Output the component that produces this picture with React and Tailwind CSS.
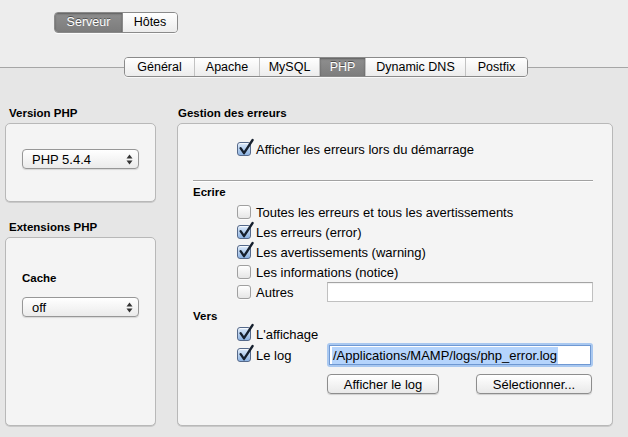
import React from "react";

function Check({ checked }) {
  return (
    <span className="relative inline-block w-[14px] h-[14px] shrink-0">
      <span
        className={
          checked
            ? "absolute inset-0 rounded-[3px] border border-[#55698a] bg-gradient-to-b from-[#dbe9f9] to-[#8db3e2] shadow-[inset_0_1px_1px_rgba(255,255,255,0.8)]"
            : "absolute inset-0 rounded-[3px] border border-[#a0a0a0] bg-gradient-to-b from-white to-[#e6e6e6] shadow-[0_1px_0_rgba(255,255,255,0.7)]"
        }
      />
      {checked && (
        <svg
          className="absolute left-[1px] top-[-4px]"
          width="16"
          height="18"
          viewBox="0 0 16 18"
        >
          <path
            d="M2.6 10.2 L6 15.2 L14.6 2"
            fill="none"
            stroke="#16202e"
            strokeWidth="2.3"
            strokeLinecap="round"
            strokeLinejoin="round"
          />
        </svg>
      )}
    </span>
  );
}

function Select({ value }) {
  return (
    <div className="w-[117px] h-[20px] rounded-[4px] border border-[#979797] bg-gradient-to-b from-white to-[#ebebeb] shadow-[0_1px_1px_rgba(0,0,0,0.12)] flex items-center pl-[9px] pr-[5px]">
      <span className="flex-1 text-[13px] leading-none">{value}</span>
      <svg width="7" height="11" viewBox="0 0 7 11">
        <path d="M3.5 0.5 L6.5 4.5 L0.5 4.5 Z" fill="#333" />
        <path d="M3.5 10.5 L6.5 6.5 L0.5 6.5 Z" fill="#333" />
      </svg>
    </div>
  );
}

function Row({ checked, label, children, h = "h-[20px]" }) {
  return (
    <div className={`flex items-center ${h}`}>
      <div className="flex items-center w-[90px] shrink-0 whitespace-nowrap">
        <Check checked={checked} />
        <span className="ml-[5px] text-[13px] leading-none">{label}</span>
      </div>
      {children}
    </div>
  );
}

function Button({ children, w }) {
  return (
    <div
      className={`${w} h-[20px] rounded-[4px] border border-[#8d8d8d] bg-gradient-to-b from-white to-[#e9e9e9] shadow-[0_1px_1px_rgba(0,0,0,0.15)] flex items-center justify-center text-[13px] leading-none`}
    >
      {children}
    </div>
  );
}

const tabs = [
  ["Général", "w-[69px]"],
  ["Apache", "w-[65px]"],
  ["MySQL", "w-[60px]"],
  ["PHP", "w-[46px]"],
  ["Dynamic DNS", "w-[100px]"],
  ["Postfix", "w-[62px]"],
];

export default function App() {
  return (
    <div className="w-[628px] h-[437px] overflow-hidden bg-[#e6e6e6] text-black font-['Liberation_Sans',Arial,sans-serif] flex flex-col">
      {/* top area */}
      <div className="bg-[#ededed] pt-[12px] h-[57px]">
        <div className="ml-[54px] flex h-[21px] w-[124px] rounded-[4px] border border-[#8a8a8a] overflow-hidden text-[12.5px] leading-none shadow-[0_1px_0_rgba(255,255,255,0.8)]">
          <div className="w-[67px] flex items-center justify-center bg-gradient-to-b from-[#8e8e8e] to-[#7c7c7c] text-white [text-shadow:0_-1px_0_rgba(0,0,0,0.45)] shadow-[inset_0_1px_2px_rgba(0,0,0,0.35)]">
            Serveur
          </div>
          <div className="flex-1 flex items-center justify-center bg-gradient-to-b from-white to-[#ececec] border-l border-[#8a8a8a]">
            Hôtes
          </div>
        </div>
      </div>

      {/* tab row */}
      <div className="flex items-center h-[20px] bg-[linear-gradient(to_bottom,#ededed_50%,#e6e6e6_50%)]">
        <div className="w-[124px] h-px bg-[#a6a6a6]" />
        <div className="flex h-[20px] rounded-[4px] border border-[#8a8a8a] overflow-hidden text-[12.5px] leading-none shadow-[0_1px_0_rgba(255,255,255,0.7)]">
          {tabs.map(([t, w], i) => (
            <div
              key={t}
              className={`${w} flex items-center justify-center ${
                i > 0 ? "border-l border-[#c2c2c2]" : ""
              } ${
                t === "PHP"
                  ? "bg-gradient-to-b from-[#8f8f8f] to-[#7d7d7d] text-white [text-shadow:0_-1px_0_rgba(0,0,0,0.45)] shadow-[inset_0_1px_2px_rgba(0,0,0,0.35)] border-[#8a8a8a]"
                  : "bg-gradient-to-b from-white to-[#ececec]"
              } ${t === "Dynamic DNS" ? "border-[#8a8a8a]" : ""}`}
            >
              {t}
            </div>
          ))}
        </div>
        <div className="flex-1 h-px bg-[#a6a6a6]" />
      </div>

      {/* content */}
      <div className="flex pl-[5px] pt-[29px] gap-[21px]">
        {/* left column */}
        <div className="w-[151px] flex flex-col">
          <div className="h-[16px] pl-[4px] flex items-center text-[11.5px] font-bold leading-none">
            Version PHP
          </div>
          <div className="mt-[1px] h-[79px] rounded-[5px] border border-[#b8b8b8] bg-[#f4f4f4] shadow-[0_1px_0_#c9c9c9] pt-[25px] pl-[16px]">
            <Select value="PHP 5.4.4" />
          </div>
          <div className="mt-[18px] h-[16px] pl-[4px] flex items-center text-[11.5px] font-bold leading-none">
            Extensions PHP
          </div>
          <div className="mt-[1px] h-[189px] rounded-[5px] border border-[#b8b8b8] bg-[#f4f4f4] shadow-[0_1px_0_#c9c9c9] pt-[33px] pl-[16px]">
            <div className="h-[16px] flex items-center text-[11.5px] font-bold leading-none">
              Cache
            </div>
            <div className="mt-[10px]">
              <Select value="off" />
            </div>
          </div>
        </div>

        {/* right column */}
        <div className="w-[436px] flex flex-col">
          <div className="h-[16px] pl-[1px] flex items-center text-[11.5px] font-bold leading-none">
            Gestion des erreurs
          </div>
          <div className="mt-[1px] h-[303px] rounded-[5px] border border-[#b8b8b8] bg-[#f4f4f4] shadow-[0_1px_0_#c9c9c9] pt-[15px] pl-[15px] pr-[19px]">
            <div className="pl-[44px] flex items-center h-[20px]">
              <Check checked />
              <span className="ml-[5px] text-[13px] leading-none">
                Afficher les erreurs lors du démarrage
              </span>
            </div>
            <div className="mt-[21px] h-px bg-[#a2a2a2] shadow-[0_1px_0_#ffffff]" />
            <div className="mt-[4px] h-[16px] flex items-center text-[11.5px] font-bold leading-none">
              Ecrire
            </div>
            <div className="mt-[1px] pl-[44px] flex flex-col">
              <Row checked={false} label="Toutes les erreurs et tous les avertissements" />
              <Row checked label="Les erreurs (error)" />
              <Row checked label="Les avertissements (warning)" />
              <Row checked={false} label="Les informations (notice)" />
              <Row checked={false} label="Autres">
                <div className="w-[266px] h-[20px] bg-white border border-[#c0c0c0] border-t-[#a4a4a4] shadow-[inset_0_1px_1px_rgba(0,0,0,0.06)]" />
              </Row>
            </div>
            <div className="mt-[7px] h-[16px] flex items-center text-[11.5px] font-bold leading-none">
              Vers
            </div>
            <div className="pl-[44px] flex flex-col">
              <Row checked label="L'affichage" h="h-[18px]" />
              <Row checked label="Le log" h="h-[24px]">
                <div className="w-[266px] h-[24px] p-[2px] rounded-[3px] bg-[#a9c8f0]">
                  <div className="w-full h-full bg-white border border-[#6f98d2] flex items-center pl-[2px]">
                    <span className="bg-[#b5d4fc] text-[13px] leading-[17px] px-[1px]">
                      /Applications/MAMP/logs/php_error.log
                    </span>
                  </div>
                </div>
              </Row>
              <div className="mt-[7px] flex items-center pl-[90px]">
                <Button w="w-[112px]">Afficher le log</Button>
                <div className="ml-[37px]">
                  <Button w="w-[116px]">Sélectionner...</Button>
                </div>
              </div>
            </div>
          </div>
        </div>
      </div>
    </div>
  );
}
